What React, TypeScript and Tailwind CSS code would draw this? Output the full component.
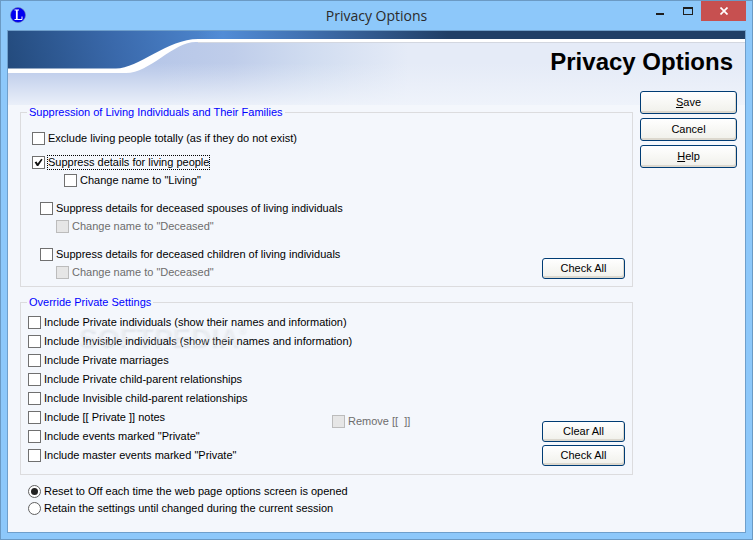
import React from "react";

type CheckProps = {
  label: React.ReactNode;
  className?: string;
  disabled?: boolean;
  defaultChecked?: boolean;
  focused?: boolean;
};

function Check({ label, className = "", disabled, defaultChecked, focused }: CheckProps) {
  return (
    <label className={`flex h-[13px] items-center gap-[3px] ${disabled ? "text-[#6d6d6d]" : "text-black"} ${className}`}>
      <span className="grid size-[13px] shrink-0">
        <input
          type="checkbox"
          defaultChecked={defaultChecked}
          disabled={disabled}
          className="peer col-start-1 row-start-1 size-[13px] appearance-none border border-[#707070] bg-white disabled:border-[#bcbcbc] disabled:bg-[#e6e6e6]"
        />
        <svg viewBox="0 0 13 13" className="pointer-events-none col-start-1 row-start-1 hidden size-[13px] peer-checked:block">
          <path d="M2.600 6.200L4.600 5.500L5.600 7.400L9.300 2.800L10.600 3.400L6.300 10H4.900Z" fill="#111" />
        </svg>
      </span>
      <span className={`py-px leading-[11px] whitespace-pre ${focused ? "outline-1 outline-dotted outline-black" : ""}`}>
        {label}
      </span>
    </label>
  );
}

function Radio({ label, defaultChecked }: { label: string; defaultChecked?: boolean }) {
  return (
    <label className="flex h-[13px] w-fit items-center gap-[3px]">
      <span className="grid size-[13px] shrink-0 place-items-center">
        <input
          type="radio"
          name="persistence"
          defaultChecked={defaultChecked}
          className="peer col-start-1 row-start-1 size-[13px] appearance-none rounded-full border border-[#606060] bg-white"
        />
        <span className="pointer-events-none col-start-1 row-start-1 hidden size-[7px] rounded-full bg-[#222] peer-checked:block" />
      </span>
      <span className="py-px leading-[11px] whitespace-nowrap">{label}</span>
    </label>
  );
}

function PushButton({ children, className }: { children: React.ReactNode; className: string }) {
  return (
    <button
      type="button"
      className={`flex items-center justify-center rounded-[3px] border border-[#003c74] bg-linear-to-b from-white to-[#f0f0ea] pb-[2px] shadow-[inset_-1px_-2px_0_#dcd8ce] ${className}`}
    >
      {children}
    </button>
  );
}

function Banner() {
  return (
    <svg className="absolute inset-x-0 top-0 h-[74px] w-full" aria-hidden="true">
      <defs>
        <linearGradient id="sky" gradientUnits="userSpaceOnUse" x1="150" y1="0" x2="400" y2="0">
          <stop offset="0" stopColor="#b7c7e8" />
          <stop offset="0.3" stopColor="#bfcdea" />
          <stop offset="0.6" stopColor="#d0dcf0" />
          <stop offset="1" stopColor="#e5ebf7" />
        </linearGradient>
        <linearGradient id="fade" gradientUnits="userSpaceOnUse" x1="0" y1="32" x2="0" y2="74">
          <stop offset="0" stopColor="#f0f4fb" stopOpacity="0" />
          <stop offset="0.25" stopColor="#f0f4fb" stopOpacity="0.2" />
          <stop offset="1" stopColor="#f0f4fb" stopOpacity="0.9" />
        </linearGradient>
        <linearGradient id="deep" gradientUnits="userSpaceOnUse" x1="0" y1="40" x2="210" y2="-20">
          <stop offset="0" stopColor="#234a7c" />
          <stop offset="0.5" stopColor="#3a69ab" />
          <stop offset="1" stopColor="#4f89d2" />
        </linearGradient>
        <linearGradient id="strip" gradientUnits="userSpaceOnUse" x1="190" y1="0" x2="440" y2="0">
          <stop offset="0" stopColor="#4f89d2" stopOpacity="0" />
          <stop offset="0.1" stopColor="#528cd6" />
          <stop offset="0.4" stopColor="#4273b4" />
          <stop offset="1" stopColor="#213f66" />
        </linearGradient>
      </defs>
      <rect width="100%" height="74" fill="url(#sky)" />
      <rect width="100%" height="74" fill="url(#fade)" />
      <path d="M190 11.5H4000" stroke="#d3d7e0" />
      <path d="M0 0H4000V11H188C165 11 142 42 118 42H0Z" fill="#fff" />
      <path d="M0 0H4000V8H190C160 8 130 37.500 108 37.500H0Z" fill="url(#deep)" />
      <rect x="190" width="4000" height="8" fill="url(#strip)" />
    </svg>
  );
}

export default function App() {
  return (
    <div className="flex min-h-screen flex-col border border-[#6b9ac4] bg-[#8dc8fa] px-[6px] pb-[6px] font-['Liberation_Sans',Arial,sans-serif] text-[11px] leading-[14px] text-black">
      <header className="relative flex h-[29px] items-start justify-between">
        <svg viewBox="0 0 16 16" className="mt-[6px] ml-[3px] size-4" aria-hidden="true">
          <circle cx="8" cy="8" r="7.500" fill="#0000f0" stroke="#6a78b0" strokeWidth="0.600" />
          <path d="M4.500 3h4.500M4.500 12.500h7.500v-3" fill="none" stroke="#fff" strokeWidth="1" />
          <path d="M6.800 3v9.500" stroke="#fff" strokeWidth="1.800" />
        </svg>
        <h1 className="absolute inset-x-0 top-[5px] text-center font-['Open_Sans',sans-serif] text-[14px] leading-[20px] text-[#2b2b2b]">
          Privacy Options
        </h1>
        <div className="relative flex h-5">
          <button type="button" aria-label="Minimize" className="flex w-7 justify-center pt-3">
            <span className="h-[2px] w-2 bg-[#1e1e1e]" />
          </button>
          <button type="button" aria-label="Maximize" className="flex w-[27px] justify-center pt-[6px]">
            <span className="h-2 w-[10px] border border-t-2 border-[#1e1e1e]" />
          </button>
          <button type="button" aria-label="Close" className="flex w-[45px] items-center justify-center bg-[#c75050]">
            <svg viewBox="0 0 8 8" className="size-2">
              <path d="M0.500 0.500L7.500 7.500M7.500 0.500L0.500 7.500" stroke="#fff" strokeWidth="1.700" />
            </svg>
          </button>
        </div>
      </header>

      <main className="relative flex grow flex-col border border-[#6f9fcb] bg-[#f4f7fc]">
        <Banner />
        <h2 className="relative pt-4 pr-3 text-right text-[24px] leading-[30px] font-bold">Privacy Options</h2>
        <div className="relative flex gap-[7px] pr-2 pl-3">
          <form className="mt-7 min-w-0 grow">
            <fieldset className="border border-[#dcdcde] bg-[#f4f7fc] pr-[7px] pb-[7px] pl-[11px]">
              <legend className="-ml-[5px] bg-[#f4f7fc] px-[2px] text-[#0000ff]">Suppression of Living Individuals and Their Families</legend>
              <div className="flex items-end justify-between pt-[13px]">
                <div className="flex flex-col items-start">
                  <Check label="Exclude living people totally (as if they do not exist)" />
                  <Check label="Suppress details for living people" className="mt-[11px]" defaultChecked focused />
                  <Check label={'Change name to "Living"'} className="mt-[5px] ml-8" />
                  <Check label="Suppress details for deceased spouses of living individuals" className="mt-[15px] ml-2" />
                  <Check label={'Change name to "Deceased"'} className="mt-[5px] ml-6" disabled />
                  <Check label="Suppress details for deceased children of living individuals" className="mt-[15px] ml-2" />
                  <Check label={'Change name to "Deceased"'} className="mt-[5px] ml-6" disabled />
                </div>
                <PushButton className="h-[21px] w-[83px]">Check All</PushButton>
              </div>
            </fieldset>

            <fieldset className="mt-2 border border-[#dcdcde] pr-[7px] pb-2 pl-[7px]">
              <legend className="-ml-px px-[2px] text-[#0000ff]">Override Private Settings</legend>
              <div className="relative flex items-end justify-between pt-[7px]">
                <div className="flex flex-col items-start gap-[6px] pb-1">
                  <Check label="Include Private individuals (show their names and information)" />
                  <Check label="Include Invisible individuals (show their names and information)" />
                  <Check label="Include Private marriages" />
                  <Check label="Include Private child-parent relationships" />
                  <Check label="Include Invisible child-parent relationships" />
                  <div className="flex h-[13px]">
                    <Check label="Include [[ Private ]] notes" className="w-[304px]" />
                    <Check label="Remove [[  ]]" className="mt-1" disabled />
                  </div>
                  <Check label={'Include events marked "Private"'} />
                  <Check label={'Include master events marked "Private"'} />
                </div>
                <div className="flex flex-col gap-[3px]">
                  <PushButton className="h-[21px] w-[83px]">Clear All</PushButton>
                  <PushButton className="h-[21px] w-[83px]">Check All</PushButton>
                </div>
                <div
                  aria-hidden="true"
                  className="pointer-events-none absolute top-[14px] left-[50px] flex items-start text-[28px] leading-[28px] font-bold text-white/25 text-shadow-[1px_2px_2px_rgb(40_50_70/0.08)]"
                >
                  SOFTPEDIA<span className="text-[10px] leading-[14px]">®</span>
                </div>
              </div>
            </fieldset>

            <div className="mt-[10px] flex flex-col gap-1 pl-2">
              <Radio label="Reset to Off each time the web page options screen is opened" defaultChecked />
              <Radio label="Retain the settings until changed during the current session" />
            </div>
          </form>

          <div className="mt-[14px] flex w-[97px] shrink-0 flex-col gap-1">
            <PushButton className="h-[23px]"><span><u>S</u>ave</span></PushButton>
            <PushButton className="h-[23px]">Cancel</PushButton>
            <PushButton className="h-[23px]"><span><u>H</u>elp</span></PushButton>
          </div>
        </div>
      </main>
    </div>
  );
}
